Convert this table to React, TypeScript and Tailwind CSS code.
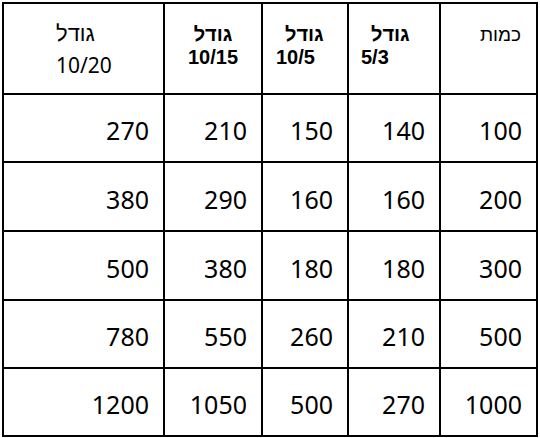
import React from "react";

const rows = [
  ["100", "140", "150", "210", "270"],
  ["200", "160", "160", "290", "380"],
  ["300", "180", "180", "380", "500"],
  ["500", "210", "260", "550", "780"],
  ["1000", "270", "500", "1050", "1200"],
];

const rowHeights = ["h-[68px]", "h-[69px]", "h-[69px]", "h-[68px]", "h-[68px]"];

const cell = "border-b-2 border-l-2 border-black p-0";
const boldHead = `${cell} align-top font-bold pt-[19px] text-[20px] leading-[23px] font-['Liberation_Sans',sans-serif]`;

const App = () => {
  return (
    <div className="bg-white w-[540px] h-[438px] p-[2px]">
      <table
        dir="rtl"
        className="table-fixed border-separate border-spacing-0 border-t-2 border-r-2 border-black w-[536px] text-black"
      >
        <colgroup>
          <col className="w-[97px]" />
          <col className="w-[92px]" />
          <col className="w-[86px]" />
          <col className="w-[98px]" />
          <col className="w-[161px]" />
        </colgroup>
        <thead>
          <tr className="h-[91px]">
            <th
              className={`${cell} align-top text-right font-normal pr-[15px] pt-[17px] text-[19px] font-['Liberation_Sans',sans-serif]`}
            >
              כמות
            </th>
            <th className={`${boldHead} text-left pl-[12px]`}>
              <span className="inline-block ml-[10px]">גודל</span>
              <br />
              <span dir="ltr">5/3</span>
            </th>
            <th className={`${boldHead} text-left pl-[13px]`}>
              <span className="inline-block ml-[9px]">גודל</span>
              <br />
              <span dir="ltr">10/5</span>
            </th>
            <th className={`${boldHead} text-center`}>
              גודל
              <br />
              <span dir="ltr">10/15</span>
            </th>
            <th className={`${cell} align-top text-left font-normal pl-[52px] pt-[16px]`}>
              <div className="text-[22px] leading-[28px] font-['Liberation_Sans',sans-serif]">
                גודל
              </div>
              <div
                dir="ltr"
                className="text-[21px] leading-[34px] font-['Noto_Sans',sans-serif]"
              >
                10/20
              </div>
            </th>
          </tr>
        </thead>
        <tbody>
          {rows.map((r, i) => (
            <tr key={i} className={rowHeights[i]}>
              {r.map((v, j) => (
                <td
                  key={j}
                  className={`${cell} align-middle text-right pr-[14px] pt-[6px] text-[25px] font-['Noto_Sans',sans-serif]`}
                >
                  {v}
                </td>
              ))}
            </tr>
          ))}
        </tbody>
      </table>
    </div>
  );
};

export default App;
